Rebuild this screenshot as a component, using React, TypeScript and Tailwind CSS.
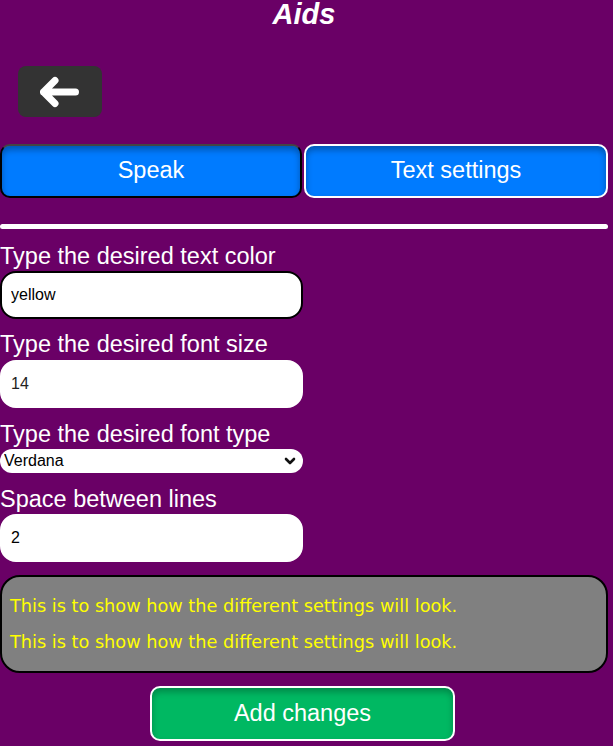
import React from "react";

export default function App() {
  return (
    <div className="w-[613px] h-[746px] overflow-hidden bg-[#6a0066] font-['Liberation_Sans',Arial,sans-serif] text-white">
      <div className="w-[608px]">
        <h1 className="h-[26px] pt-[1px] text-center text-[29px] leading-[27px] font-bold italic">Aids</h1>

        <div className="mt-[40px] pl-[18px]">
          <button className="flex h-[51px] w-[84px] items-center justify-center rounded-[8px] bg-[#333333]">
            <svg width="40" height="32" viewBox="0 0 40 32" fill="none">
              <path
                d="M3.5 16 H35.5 M15 4.5 L3.5 16 L15 27.5"
                stroke="white"
                strokeWidth="7"
                strokeLinecap="round"
                strokeLinejoin="round"
              />
            </svg>
          </button>
        </div>

        <div className="mt-[27px] flex gap-[2px]">
          <button className="h-[54px] w-[302px] rounded-[10px] border-2 border-black border-t-[#444] bg-[#007bff] text-[23.5px] text-white shadow-[inset_0_4px_6px_rgba(0,0,0,0.3)]">
            Speak
          </button>
          <button className="h-[54px] w-[304px] rounded-[10px] border-2 border-white bg-[#007bff] text-[23.5px] text-white shadow-[inset_0_4px_6px_rgba(0,0,0,0.3)]">
            Text settings
          </button>
        </div>

        <div className="mt-[26px] h-[5px] w-[608px] rounded-full bg-white" />

        <div className="mt-[14px] text-[23.5px] leading-[27px]">Type the desired text color</div>
        <input
          readOnly
          value="yellow"
          className="mt-[1px] block h-[48px] w-[303px] rounded-[16px] border-2 border-black bg-white px-[9px] text-[16px] text-black outline-none"
        />

        <div className="mt-[12px] text-[23.5px] leading-[27px]">Type the desired font size</div>
        <input
          readOnly
          value="14"
          className="mt-[2px] block h-[48px] w-[303px] rounded-[16px] border-2 border-white bg-white px-[9px] text-[16px] text-[#222] outline-none"
        />

        <div className="mt-[13px] text-[23.5px] leading-[27px]">Type the desired font type</div>
        <div className="relative mt-[1px] h-[24px] w-[303px]">
          <select
            defaultValue="Verdana"
            className="block h-[24px] w-[303px] appearance-none rounded-[12px] bg-white pl-[4px] text-[16px] leading-[24px] text-black outline-none"
          >
            <option>Verdana</option>
            <option>Arial</option>
            <option>Times New Roman</option>
          </select>
          <svg
            className="pointer-events-none absolute left-[284px] top-[8px]"
            width="12"
            height="9"
            viewBox="0 0 12 9"
            fill="none"
          >
            <path d="M2 2 L6 6 L10 2" stroke="#111" strokeWidth="2.6" strokeLinecap="round" strokeLinejoin="round" />
          </svg>
        </div>

        <div className="mt-[13px] text-[23.5px] leading-[27px]">Space between lines</div>
        <input
          readOnly
          value="2"
          className="mt-[1px] block h-[48px] w-[303px] rounded-[16px] border-2 border-white bg-white px-[9px] text-[16px] text-black outline-none"
        />

        <div className="mt-[13px] rounded-[20px] border-2 border-black bg-[#808080] px-[8px] py-[11px] font-['Verdana','DejaVu_Sans',sans-serif] text-[17.7px] leading-[36px] text-[#ffff00]">
          <p>This is to show how the different settings will look.</p>
          <p>This is to show how the different settings will look.</p>
        </div>

        <div className="mt-[13px] flex justify-center">
          <button className="ml-[-3px] h-[55px] w-[305px] rounded-[10px] border-2 border-white bg-[#00b862] text-[23.5px] text-white shadow-[inset_0_4px_6px_rgba(0,0,0,0.25)]">
            Add changes
          </button>
        </div>
      </div>
    </div>
  );
}
